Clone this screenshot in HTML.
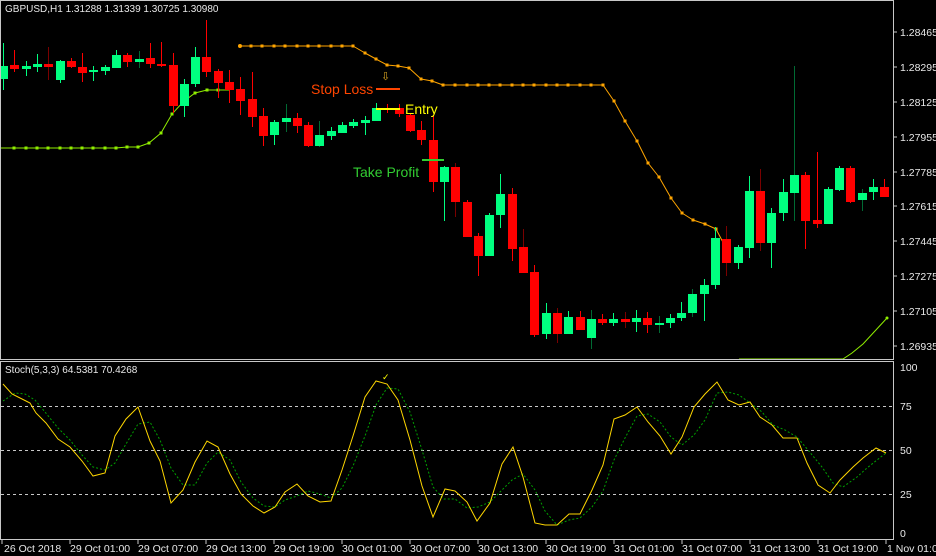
<!DOCTYPE html>
<html><head><meta charset="utf-8"><style>
html,body{margin:0;padding:0;background:#000;}
svg{display:block;}
text{font-family:"Liberation Sans",sans-serif;}
.g{fill:#00ff80}.r{fill:#ff0000}.dg{fill:#006a33}.dr{fill:#7a0000}
.ax{fill:#e8e8e8;font-size:10.5px}
</style></head><body>
<svg width="936" height="556" viewBox="0 0 936 556" xmlns="http://www.w3.org/2000/svg">
<rect width="936" height="556" fill="#000"/>
<defs><clipPath id="mp"><rect x="1" y="1" width="892" height="358"/></clipPath></defs>
<g clip-path="url(#mp)">
<polyline fill="none" stroke="#ffa500" stroke-width="1" stroke-linejoin="round" marker-mid="url(#om)" points="240,46 251,46 262,46 274,46 285,46 297,46 308,46 319,46 331,46 342,46 353,46 365,53 376,59 387,65 398,66 409,68 421,79 432,81 443,85 455,85 467,85 478,85 489,85 500,85 512,85 523,85 534,85 546,85 557,85 568,85 580,85 591,85 603,85 614,101 625,121 637,141 648,163 659,177 671,198 682,213 693,220 705,224 716,229 727,250"/>
<defs>
<marker id="om" markerWidth="3" markerHeight="3" refX="1.5" refY="1.5" markerUnits="userSpaceOnUse"><rect width="3" height="3" fill="#ffa500"/></marker>
<marker id="lm" markerWidth="3" markerHeight="3" refX="1.5" refY="1.5" markerUnits="userSpaceOnUse"><rect width="3" height="3" fill="#90ee00"/></marker>
</defs>
<circle cx="240" cy="46" r="2" fill="#ffa500"/>
<polyline fill="none" stroke="#90ee00" stroke-width="1" marker-mid="url(#lm)" points="1,148 14,148 26,148 37,148 48,148 60,148 71,148 82,148 93,148 105,148 116,148 127,147 138,147 149,143 161,133 172,114 183,102 195,93 207,90 218,90 229,90"/>
<polyline fill="none" stroke="#90ee00" stroke-width="1" points="739,359 843,359 852,353 863,344 887,318"/>
<circle cx="887" cy="318" r="1.5" fill="#90ee00"/>
<rect x="3" y="43" width="1" height="47" class="g"/><rect x="-1" y="66" width="9" height="13" class="g"/>
<rect x="14" y="50" width="1" height="22" class="r"/><rect x="10" y="65" width="9" height="4" class="r"/>
<rect x="26" y="61" width="1" height="15" class="g"/><rect x="22" y="66" width="9" height="3" class="g"/>
<rect x="37" y="54" width="1" height="18" class="g"/><rect x="33" y="64" width="9" height="3" class="g"/>
<rect x="48" y="47" width="1" height="33" class="dr"/><rect x="44" y="64" width="9" height="3" class="r"/>
<rect x="60" y="60" width="1" height="23" class="g"/><rect x="56" y="61" width="9" height="19" class="g"/>
<rect x="71" y="58" width="1" height="10" class="r"/><rect x="67" y="61" width="9" height="6" class="r"/>
<rect x="82" y="53" width="1" height="29" class="r"/><rect x="78" y="67" width="9" height="6" class="r"/>
<rect x="93" y="66" width="1" height="15" class="g"/><rect x="89" y="70" width="9" height="2" class="g"/>
<rect x="105" y="65" width="1" height="10" class="g"/><rect x="101" y="67" width="9" height="4" class="g"/>
<rect x="116" y="50" width="1" height="18" class="g"/><rect x="112" y="55" width="9" height="13" class="g"/>
<rect x="127" y="53" width="1" height="14" class="r"/><rect x="123" y="55" width="9" height="7" class="r"/>
<rect x="139" y="51" width="1" height="17" class="dg"/><rect x="135" y="59" width="9" height="3" class="g"/>
<rect x="150" y="43" width="1" height="25" class="r"/><rect x="146" y="58" width="9" height="6" class="r"/>
<rect x="161" y="42" width="1" height="25" class="r"/><rect x="157" y="64" width="9" height="2" class="r"/>
<rect x="173" y="53" width="1" height="60" class="r"/><rect x="169" y="65" width="9" height="41" class="r"/>
<rect x="184" y="79" width="1" height="38" class="g"/><rect x="180" y="84" width="9" height="22" class="g"/>
<rect x="195" y="47" width="1" height="40" class="g"/><rect x="191" y="57" width="9" height="27" class="g"/>
<rect x="206" y="20" width="1" height="57" class="r"/><rect x="202" y="57" width="9" height="15" class="r"/>
<rect x="218" y="69" width="1" height="29" class="r"/><rect x="214" y="71" width="9" height="12" class="r"/>
<rect x="229" y="70" width="1" height="33" class="r"/><rect x="225" y="82" width="9" height="8" class="r"/>
<rect x="240" y="77" width="1" height="38" class="r"/><rect x="236" y="89" width="9" height="12" class="r"/>
<rect x="252" y="72" width="1" height="55" class="r"/><rect x="248" y="99" width="9" height="18" class="r"/>
<rect x="263" y="108" width="1" height="38" class="r"/><rect x="259" y="116" width="9" height="20" class="r"/>
<rect x="274" y="120" width="1" height="25" class="g"/><rect x="270" y="122" width="9" height="13" class="g"/>
<rect x="286" y="104" width="1" height="28" class="dg"/><rect x="282" y="118" width="9" height="4" class="g"/>
<rect x="297" y="113" width="1" height="20" class="r"/><rect x="293" y="118" width="9" height="8" class="r"/>
<rect x="308" y="122" width="1" height="25" class="r"/><rect x="304" y="125" width="9" height="21" class="r"/>
<rect x="319" y="121" width="1" height="26" class="dg"/><rect x="315" y="135" width="9" height="11" class="g"/>
<rect x="331" y="127" width="1" height="13" class="g"/><rect x="327" y="131" width="9" height="5" class="g"/>
<rect x="342" y="122" width="1" height="11" class="g"/><rect x="338" y="125" width="9" height="8" class="g"/>
<rect x="353" y="119" width="1" height="9" class="g"/><rect x="349" y="122" width="9" height="4" class="g"/>
<rect x="365" y="116" width="1" height="19" class="g"/><rect x="361" y="120" width="9" height="3" class="g"/>
<rect x="376" y="103" width="1" height="18" class="g"/><rect x="372" y="108" width="9" height="13" class="g"/>
<rect x="387" y="104" width="1" height="9" class="r"/><rect x="383" y="108" width="9" height="2" class="r"/>
<rect x="399" y="104" width="1" height="13" class="r"/><rect x="395" y="108" width="9" height="6" class="r"/>
<rect x="410" y="113" width="1" height="19" class="r"/><rect x="406" y="115" width="9" height="16" class="r"/>
<rect x="421" y="121" width="1" height="24" class="r"/><rect x="417" y="130" width="9" height="10" class="r"/>
<rect x="433" y="115" width="1" height="77" class="r"/><rect x="429" y="140" width="9" height="42" class="r"/>
<rect x="444" y="166" width="1" height="55" class="g"/><rect x="440" y="167" width="9" height="15" class="g"/>
<rect x="455" y="163" width="1" height="54" class="dr"/><rect x="451" y="167" width="9" height="35" class="r"/>
<rect x="467" y="200" width="1" height="37" class="r"/><rect x="463" y="202" width="9" height="35" class="r"/>
<rect x="478" y="233" width="1" height="43" class="r"/><rect x="474" y="236" width="9" height="20" class="r"/>
<rect x="489" y="213" width="1" height="43" class="g"/><rect x="485" y="215" width="9" height="41" class="g"/>
<rect x="500" y="174" width="1" height="54" class="g"/><rect x="496" y="194" width="9" height="21" class="g"/>
<rect x="512" y="188" width="1" height="73" class="r"/><rect x="508" y="194" width="9" height="55" class="r"/>
<rect x="523" y="229" width="1" height="44" class="dr"/><rect x="519" y="247" width="9" height="26" class="r"/>
<rect x="534" y="265" width="1" height="72" class="r"/><rect x="530" y="272" width="9" height="63" class="r"/>
<rect x="546" y="303" width="1" height="36" class="g"/><rect x="542" y="313" width="9" height="21" class="g"/>
<rect x="557" y="308" width="1" height="35" class="dr"/><rect x="553" y="313" width="9" height="21" class="r"/>
<rect x="568" y="311" width="1" height="23" class="g"/><rect x="564" y="317" width="9" height="17" class="g"/>
<rect x="580" y="311" width="1" height="19" class="r"/><rect x="576" y="317" width="9" height="13" class="r"/>
<rect x="591" y="310" width="1" height="39" class="dg"/><rect x="587" y="319" width="9" height="19" class="g"/>
<rect x="602" y="314" width="1" height="11" class="r"/><rect x="598" y="319" width="9" height="4" class="r"/>
<rect x="613" y="313" width="1" height="13" class="g"/><rect x="609" y="319" width="9" height="4" class="g"/>
<rect x="625" y="312" width="1" height="16" class="dr"/><rect x="621" y="319" width="9" height="3" class="r"/>
<rect x="636" y="310" width="1" height="22" class="g"/><rect x="632" y="318" width="9" height="4" class="g"/>
<rect x="647" y="312" width="1" height="21" class="r"/><rect x="643" y="318" width="9" height="7" class="r"/>
<rect x="659" y="316" width="1" height="17" class="dg"/><rect x="655" y="323" width="9" height="2" class="g"/>
<rect x="670" y="314" width="1" height="14" class="g"/><rect x="666" y="318" width="9" height="5" class="g"/>
<rect x="681" y="302" width="1" height="19" class="g"/><rect x="677" y="313" width="9" height="5" class="g"/>
<rect x="692" y="289" width="1" height="28" class="dg"/><rect x="688" y="294" width="9" height="19" class="g"/>
<rect x="704" y="279" width="1" height="42" class="g"/><rect x="700" y="285" width="9" height="9" class="g"/>
<rect x="715" y="227" width="1" height="62" class="g"/><rect x="711" y="238" width="9" height="47" class="g"/>
<rect x="726" y="226" width="1" height="50" class="dr"/><rect x="722" y="239" width="9" height="24" class="r"/>
<rect x="738" y="245" width="1" height="24" class="g"/><rect x="734" y="247" width="9" height="16" class="g"/>
<rect x="749" y="176" width="1" height="82" class="g"/><rect x="745" y="191" width="9" height="57" class="g"/>
<rect x="760" y="169" width="1" height="82" class="dr"/><rect x="756" y="191" width="9" height="52" class="r"/>
<rect x="771" y="208" width="1" height="60" class="g"/><rect x="767" y="213" width="9" height="30" class="g"/>
<rect x="783" y="179" width="1" height="42" class="g"/><rect x="779" y="192" width="9" height="21" class="g"/>
<rect x="794" y="66" width="1" height="155" class="dg"/><rect x="790" y="175" width="9" height="18" class="g"/>
<rect x="805" y="172" width="1" height="77" class="r"/><rect x="801" y="175" width="9" height="46" class="r"/>
<rect x="817" y="152" width="1" height="76" class="r"/><rect x="813" y="220" width="9" height="4" class="r"/>
<rect x="828" y="187" width="1" height="37" class="g"/><rect x="824" y="189" width="9" height="35" class="g"/>
<rect x="839" y="166" width="1" height="25" class="g"/><rect x="835" y="168" width="9" height="22" class="g"/>
<rect x="850" y="166" width="1" height="37" class="r"/><rect x="846" y="168" width="9" height="34" class="r"/>
<rect x="862" y="189" width="1" height="22" class="dg"/><rect x="858" y="193" width="9" height="7" class="g"/>
<rect x="873" y="179" width="1" height="21" class="g"/><rect x="869" y="187" width="9" height="5" class="g"/>
<rect x="884" y="179" width="1" height="18" class="r"/><rect x="880" y="187" width="9" height="10" class="r"/>
<rect x="376" y="88" width="24" height="2" fill="#ff4500"/>
<text x="311" y="94" font-size="14" fill="#ff4500">Stop Loss</text>
<rect x="376" y="108" width="24" height="2" fill="#ffff00"/>
<text x="405" y="114" font-size="14" fill="#ffff00">Entry</text>
<rect x="422" y="159" width="22" height="2" fill="#32cd32"/>
<text x="353" y="177" font-size="14" fill="#32cd32">Take Profit</text>
<text x="381" y="80" font-size="11" fill="#daa520">⇩</text>
</g>
<text x="5" y="12" font-size="10" fill="#e8e8e8">GBPUSD,H1  1.31288 1.31339 1.30725 1.30980</text>
<rect x="0.5" y="0.5" width="893" height="359" fill="none" stroke="#c8c8c8"/>
<rect x="0.5" y="361.5" width="893" height="178" fill="none" stroke="#c8c8c8"/>
<g class="ax">
<text x="900" y="36">1.28465</text><text x="900" y="71">1.28295</text><text x="900" y="106">1.28125</text><text x="900" y="141">1.27955</text><text x="900" y="176">1.27785</text><text x="900" y="210">1.27615</text><text x="900" y="245">1.27445</text><text x="900" y="280">1.27275</text><text x="900" y="315">1.27105</text><text x="900" y="350">1.26935</text>
<text x="900" y="371">100</text><text x="900" y="410">75</text><text x="900" y="454">50</text><text x="900" y="498">25</text><text x="900" y="537">0</text>
</g>
<g stroke="#c8c8c8"><line x1="894" y1="32" x2="897" y2="32"/><line x1="894" y1="67" x2="897" y2="67"/><line x1="894" y1="102" x2="897" y2="102"/><line x1="894" y1="137" x2="897" y2="137"/><line x1="894" y1="172" x2="897" y2="172"/><line x1="894" y1="206" x2="897" y2="206"/><line x1="894" y1="241" x2="897" y2="241"/><line x1="894" y1="276" x2="897" y2="276"/><line x1="894" y1="311" x2="897" y2="311"/><line x1="894" y1="346" x2="897" y2="346"/></g>
<g stroke="#c8c8c8" stroke-dasharray="3,3"><line x1="1" y1="406.5" x2="893" y2="406.5"/><line x1="1" y1="450.5" x2="893" y2="450.5"/><line x1="1" y1="494.5" x2="893" y2="494.5"/></g>
<text x="5" y="373" font-size="10" fill="#e8e8e8">Stoch(5,3,3) 64.5381 70.4268</text>
<polyline fill="none" stroke="#00a000" stroke-width="1" stroke-dasharray="2,2" points="3,401 15,393 25,394 35,400 45,412 58,428 70,440 82,455 93,467 105,470 115,463 126,444 138,424 150,422 160,440 171,468 183,485 195,485 207,463 218,452 230,460 241,482 253,498 264,506 275,507 285,500 297,496 308,491 320,494 331,498 342,488 353,466 365,436 376,405 387,388 398,389 410,412 422,450 433,487 444,499 455,499 467,508 478,507 490,502 501,491 512,480 523,474 535,490 545,511 557,525 569,520 580,518 592,507 603,491 614,460 625,438 637,416 648,414 660,422 671,437 682,445 694,435 705,420 717,393 728,392 739,395 750,403 762,412 773,425 785,430 797,437 808,450 822,467 833,483 843,487 857,477 867,468 877,460 886,453"/>
<polyline fill="none" stroke="#ffd700" stroke-width="1" points="3,384 12,394 24,400 30,403 36,413 46,423 58,439 70,447 82,461 93,476 105,473 115,436 126,419 138,407 150,441 160,461 171,503 183,490 195,462 207,441 218,447 230,474 241,494 253,506 264,513 275,507 285,492 297,484 308,496 320,502 331,501 342,470 353,436 365,397 376,381 387,384 398,400 410,440 422,486 433,517 445,489 455,491 467,502 477,521 490,503 502,464 513,447 523,477 535,523 545,525 557,525 569,514 580,514 592,490 603,465 614,419 625,415 637,407 648,422 660,436 671,454 682,437 694,407 705,394 717,382 728,400 739,405 750,402 760,417 772,425 783,438 797,438 807,463 818,485 830,493 840,480 853,467 863,458 876,448 886,453"/>
<text x="382" y="380" font-size="9" fill="#ffff00">✓</text>
<g stroke="#c8c8c8"><line x1="2" y1="540" x2="2" y2="544"/><line x1="70" y1="540" x2="70" y2="544"/><line x1="138" y1="540" x2="138" y2="544"/><line x1="206" y1="540" x2="206" y2="544"/><line x1="274" y1="540" x2="274" y2="544"/><line x1="342" y1="540" x2="342" y2="544"/><line x1="410" y1="540" x2="410" y2="544"/><line x1="478" y1="540" x2="478" y2="544"/><line x1="546" y1="540" x2="546" y2="544"/><line x1="614" y1="540" x2="614" y2="544"/><line x1="682" y1="540" x2="682" y2="544"/><line x1="750" y1="540" x2="750" y2="544"/><line x1="818" y1="540" x2="818" y2="544"/><line x1="886" y1="540" x2="886" y2="544"/></g>
<g class="ax">
<text x="4" y="552">26 Oct 2018</text><text x="70" y="552">29 Oct 01:00</text><text x="138" y="552">29 Oct 07:00</text><text x="206" y="552">29 Oct 13:00</text><text x="274" y="552">29 Oct 19:00</text><text x="342" y="552">30 Oct 01:00</text><text x="410" y="552">30 Oct 07:00</text><text x="478" y="552">30 Oct 13:00</text><text x="546" y="552">30 Oct 19:00</text><text x="614" y="552">31 Oct 01:00</text><text x="682" y="552">31 Oct 07:00</text><text x="750" y="552">31 Oct 13:00</text><text x="818" y="552">31 Oct 19:00</text><text x="887" y="552">1 Nov 01:00</text>
</g>
</svg>
</body></html>
